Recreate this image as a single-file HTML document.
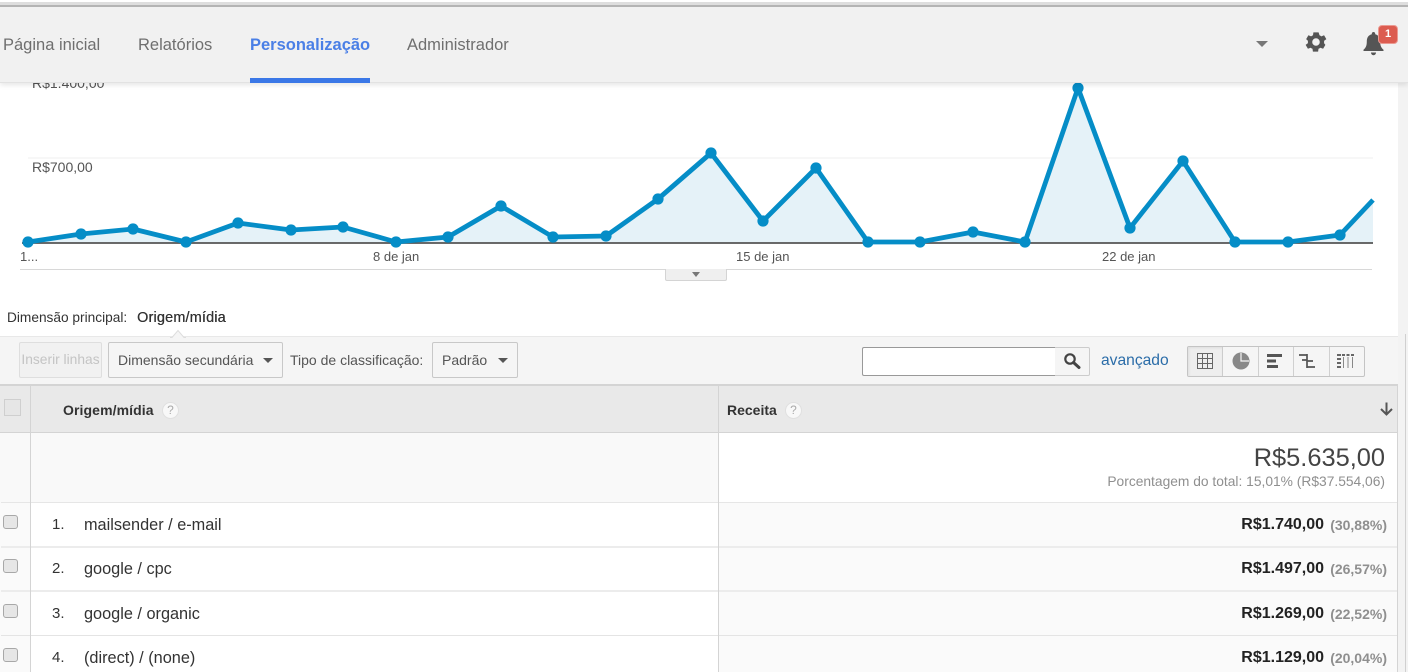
<!DOCTYPE html>
<html lang="pt"><head><meta charset="utf-8"><title>Analytics</title>
<style>
html,body{margin:0;padding:0;background:#fff}
body{width:1408px;height:672px;overflow:hidden;position:relative;font-family:"Liberation Sans",Arial,sans-serif;color:#333}
.a{position:absolute;white-space:nowrap}
.box{position:absolute;box-sizing:border-box}
.nav{top:36px;font-size:16.5px;line-height:18px;color:#6f6f6f}
.tick{top:250px;font-size:13px;line-height:14px;color:#555}
.btn{position:absolute;box-sizing:border-box;border:1px solid #c8c8c8;border-radius:2px;background:#f5f5f5}
.tri{position:absolute;width:0;height:0;border-left:5px solid transparent;border-right:5px solid transparent;border-top:5px solid #555}
.line{position:absolute;left:1px;width:1396px;height:2px;background:#ececec}
.cb{position:absolute;left:3px;width:15px;height:14px;box-sizing:border-box;border:1px solid #a8a8a8;border-radius:3px;background:#e6e6e6}
.n{position:absolute;left:52px;font-size:15px;line-height:16px;color:#333}
.s{position:absolute;left:84px;font-size:16.3px;line-height:16px;color:#333;white-space:nowrap}
.v{position:absolute;right:84px;font-size:16px;line-height:16px;font-weight:bold;color:#222;white-space:nowrap}
.p{position:absolute;right:21px;font-size:14px;line-height:16px;font-weight:bold;color:#8f8f8f;white-space:nowrap}
.q{position:absolute;width:17px;height:17px;border-radius:50%;background:#f8f8f8;border:1px solid #e0e0e0;box-sizing:border-box;font-size:12px;line-height:15px;text-align:center;color:#aaa}
</style></head><body>

<!-- side strip -->
<div class="box" style="left:1398px;top:83px;width:10px;height:589px;background:#f3f3f3"></div>
<div class="box" style="left:1405px;top:334px;width:1px;height:338px;background:#d0d0d0"></div>

<!-- chart -->
<svg class="a" style="left:0;top:83px" width="1398" height="200" viewBox="0 83 1398 200">
<line x1="28" y1="158" x2="1373" y2="158" stroke="#efefef" stroke-width="1"/>
<polygon fill="#e5f2f8" points="28,242 81,234 133,229 186,242 238,223 291,230 343,227 396,242 448,237 501,206 553,237 606,236 658,199 711,153 763,221 816,168 868,242 920,242 973,232 1025,242 1078,88 1130,228 1183,161 1235,242 1288,242 1340,235 1373,200 1373,243 28,243"/>
<line x1="22" y1="243" x2="1373" y2="243" stroke="#555" stroke-width="1.8"/>
<polyline fill="none" stroke="#058dc7" stroke-width="4.800" stroke-linejoin="round" points="28,242 81,234 133,229 186,242 238,223 291,230 343,227 396,242 448,237 501,206 553,237 606,236 658,199 711,153 763,221 816,168 868,242 920,242 973,232 1025,242 1078,88 1130,228 1183,161 1235,242 1288,242 1340,235 1373,200"/>
<g fill="#058dc7">
<circle cx="28" cy="242" r="5.600"/><circle cx="81" cy="234" r="5.600"/><circle cx="133" cy="229" r="5.600"/><circle cx="186" cy="242" r="5.600"/><circle cx="238" cy="223" r="5.600"/><circle cx="291" cy="230" r="5.600"/><circle cx="343" cy="227" r="5.600"/><circle cx="396" cy="242" r="5.600"/><circle cx="448" cy="237" r="5.600"/><circle cx="501" cy="206" r="5.600"/><circle cx="553" cy="237" r="5.600"/><circle cx="606" cy="236" r="5.600"/><circle cx="658" cy="199" r="5.600"/><circle cx="711" cy="153" r="5.600"/><circle cx="763" cy="221" r="5.600"/><circle cx="816" cy="168" r="5.600"/><circle cx="868" cy="242" r="5.600"/><circle cx="920" cy="242" r="5.600"/><circle cx="973" cy="232" r="5.600"/><circle cx="1025" cy="242" r="5.600"/><circle cx="1078" cy="88" r="5.600"/><circle cx="1130" cy="228" r="5.600"/><circle cx="1183" cy="161" r="5.600"/><circle cx="1235" cy="242" r="5.600"/><circle cx="1288" cy="242" r="5.600"/><circle cx="1340" cy="235" r="5.600"/>
</g>
<line x1="20" y1="269.500" x2="1372" y2="269.500" stroke="#d8d8d8" stroke-width="1"/>
</svg>
<div class="a" style="left:32px;top:75px;font-size:14px;line-height:16px;color:#555">R$1.400,00</div>
<div class="a" style="left:32px;top:159px;font-size:14px;line-height:16px;color:#555">R$700,00</div>
<div class="a tick" style="left:20px">1...</div>
<div class="a tick" style="left:373px">8 de jan</div>
<div class="a tick" style="left:736px">15 de jan</div>
<div class="a tick" style="left:1102px">22 de jan</div>
<div class="box" style="left:665px;top:269px;width:62px;height:12px;background:#efefef;border:1px solid #d4d4d4;border-top:none;border-radius:0 0 2px 2px"></div>
<div class="tri" style="left:692px;top:272px;border-left-width:4px;border-right-width:4px;border-top-color:#777"></div>

<!-- top nav -->
<div class="box" style="left:0;top:0;width:1408px;height:83px;background:#f1f1f1;border-bottom:1px solid #e2e2e2;box-shadow:0 2px 5px rgba(0,0,0,.10)"></div>
<div class="box" style="left:0;top:0;width:1408px;height:2px;background:#fff"></div>
<div class="box" style="left:0;top:2px;width:1408px;height:3px;background:#dedede"></div>
<div class="box" style="left:0;top:5px;width:1408px;height:2px;background:#b4b4b4"></div>
<div class="a nav" style="left:3px">Página inicial</div>
<div class="a nav" style="left:138px">Relatórios</div>
<div class="a nav" style="left:250px;color:#4a7fe6;font-weight:bold">Personalização</div>
<div class="box" style="left:250px;top:78px;width:120px;height:5px;background:#3b78e7"></div>
<div class="a nav" style="left:407px">Administrador</div>
<div class="tri" style="left:1256px;top:41px;border-left-width:6px;border-right-width:6px;border-top:6px solid #777"></div>
<svg class="a" style="left:1303px;top:29px" width="26" height="26" viewBox="0 0 24 24"><path fill="#555" fill-rule="evenodd" d="M19.400 13c.05-.33.08-.66.08-1s-.03-.67-.08-1l2.150-1.650-2.100-3.600-2.500 1c-.52-.4-1.100-.74-1.730-1L14.400 3.100h-4.800l-.37 2.650c-.63.26-1.200.6-1.730 1l-2.500-1-2.100 3.600L4.600 11c-.05.33-.08.66-.08 1s.03.67.08 1l-2.150 1.650 2.100 3.600 2.500-1c.52.4 1.100.74 1.730 1l.37 2.650h4.800l.37-2.650c.63-.26 1.200-.6 1.730-1l2.500 1 2.100-3.600L19.400 13zM12 15.500a3.500 3.500 0 1 1 0-7 3.500 3.500 0 0 1 0 7z"/></svg>
<svg class="a" style="left:1361px;top:30px" width="25" height="27" viewBox="0 0 25 27"><path fill="#555" d="M12.500 2c1 0 1.700.7 1.700 1.700v.6c3.400.8 5 3.600 5 7.200 0 4.300 1 6.200 3.300 8.300v1.200H2.500v-1.200c2.300-2.100 3.300-4 3.300-8.300 0-3.600 1.600-6.400 5-7.200v-.6c0-1 .7-1.700 1.700-1.700z"/><path fill="#555" d="M10 22.500h5c0 1.500-1 2.700-2.500 2.700S10 24 10 22.500z"/></svg>
<div class="box" style="left:1378px;top:25px;width:20px;height:19px;background:#dc5c50;border-radius:4px;border:1px solid #eb9a92;color:#fff;font-size:11px;font-weight:bold;line-height:17px;text-align:center">1</div>

<!-- dimension -->
<div class="a" style="left:7px;top:311px;font-size:13.7px;line-height:14px;color:#333">Dimensão principal:</div>
<div class="a" style="left:137px;top:311px;font-size:14.400px;line-height:14px;color:#333;letter-spacing:.2px;text-shadow:.3px 0 0 #333">Origem/mídia</div>

<!-- toolbar -->
<div class="box" style="left:0;top:336px;width:1398px;height:48px;background:#f5f5f5;border-top:1px solid #e8e8e8"></div>
<svg class="a" style="left:170px;top:329px" width="16" height="9" viewBox="0 0 16 9"><path d="M0 8.500h2L8 1.500l6 7h2" fill="#f5f5f5" stroke="#ddd"/></svg>
<div class="btn" style="left:19px;top:342px;width:83px;height:36px;border-color:#dedede;background:#f1f1f1;color:#c4c4c4;font-size:13.800px;line-height:34px;text-align:center;white-space:nowrap;overflow:hidden">Inserir linhas</div>
<div class="btn" style="left:108px;top:342px;width:175px;height:36px;font-size:14px;line-height:34px;padding-left:9px;color:#555;white-space:nowrap">Dimensão secundária</div>
<div class="tri" style="left:263px;top:358px"></div>
<div class="a" style="left:290px;top:353px;font-size:14px;line-height:15px;color:#555">Tipo de classificação:</div>
<div class="btn" style="left:432px;top:342px;width:86px;height:36px;font-size:14px;line-height:34px;padding-left:9px;color:#555">Padrão</div>
<div class="tri" style="left:498px;top:358px"></div>
<div class="box" style="left:862px;top:347px;width:194px;height:29px;background:#fff;border:1px solid #999;border-right:1px solid #ccc;border-radius:2px 0 0 2px"></div>
<div class="box" style="left:1055px;top:347px;width:35px;height:29px;background:#f5f5f5;border:1px solid #ccc;border-left:none;border-radius:0 2px 2px 0"></div>
<svg class="a" style="left:1063px;top:352px" width="18" height="18" viewBox="0 0 18 18"><circle cx="7" cy="7" r="4.700" fill="none" stroke="#444" stroke-width="2.200"/><path d="M10.500 10.500L16 15.500" stroke="#444" stroke-width="3" stroke-linecap="round"/></svg>
<div class="a" style="left:1101px;top:353px;font-size:15.600px;line-height:16px;color:#2a6ca8">avançado</div>

<div class="btn" style="left:1187px;top:346px;width:178px;height:31px;background:#f5f5f5;border-color:#c4c4c4;border-width:1px"></div>
<div class="box" style="left:1188px;top:347px;width:35px;height:29px;background:#eee;border-right:1px solid #ccc;box-shadow:inset 1px 1px 2px #ddd"></div>
<div class="box" style="left:1258px;top:347px;width:1px;height:29px;background:#d0d0d0"></div>
<div class="box" style="left:1293px;top:347px;width:1px;height:29px;background:#d0d0d0"></div>
<div class="box" style="left:1329px;top:347px;width:1px;height:29px;background:#d0d0d0"></div>
<svg class="a" style="left:1187px;top:346px" width="178" height="31" viewBox="0 0 178 31">
<g fill="none" stroke="#666" stroke-width="1"><rect x="10.500" y="7.500" width="15" height="15"/><path d="M15.500 7.500v15M20.500 7.500v15M10.500 12.500h15M10.500 17.500h15"/></g>
<circle cx="54" cy="15" r="8.500" fill="#888"/><path d="M54 7v8h8" fill="none" stroke="#f5f5f5" stroke-width="1.200"/>
<g fill="#555"><rect x="80" y="8" width="15" height="3"/><rect x="80" y="13.500" width="9" height="3"/><rect x="80" y="19" width="11" height="3"/></g>
<g fill="none" stroke="#555" stroke-width="1.700"><path d="M112 9h8M120 8v7M120 14h-5M120 14v8M120 21h8M120 15h6"/></g>
<g fill="#666"><rect x="150" y="8" width="4" height="2"/><rect x="150" y="12" width="4" height="2"/><rect x="150" y="16" width="4" height="2"/><rect x="150" y="20" width="4" height="2"/><rect x="155" y="8" width="3" height="2"/><rect x="159.500" y="8" width="3" height="2"/><rect x="164" y="8" width="3" height="2"/></g>
<g stroke="#888" stroke-width="1"><path d="M156.500 11v11M161 11v11M165.500 11v11"/></g>
</svg>

<!-- table head -->
<div class="box" style="left:0;top:384px;width:1398px;height:49px;background:#e9e9e9;border-top:2px solid #d4d4d4;border-bottom:1px solid #d4d4d4"></div>
<div class="box" style="left:4px;top:399px;width:17px;height:17px;border:1px solid #cfcfcf;background:#e6e6e6"></div>
<div class="a" style="left:63px;top:403px;font-size:14px;line-height:15px;font-weight:bold;color:#333;letter-spacing:.1px">Origem/mídia</div>
<div class="q" style="left:162px;top:402px">?</div>
<div class="a" style="left:727px;top:403px;font-size:14px;line-height:15px;font-weight:bold;color:#333">Receita</div>
<div class="q" style="left:785px;top:402px">?</div>
<svg class="a" style="left:1379px;top:401px" width="15" height="16" viewBox="0 0 15 16"><path d="M7.500 1.500v11.500M2 8l5.500 5.500L13 8" fill="none" stroke="#555" stroke-width="2"/></svg>

<!-- total row -->
<div class="box" style="left:0;top:433px;width:718px;height:70px;background:#f9f9f9"></div>
<div class="box" style="left:719px;top:433px;width:678px;height:70px;background:#fff"></div>
<div class="a" style="right:23px;top:444px;font-size:25.400px;line-height:28px;color:#444">R$5.635,00</div>
<div class="a" style="right:23px;top:474px;font-size:13.800px;line-height:15px;color:#8f8f8f">Porcentagem do total: 15,01% (R$37.554,06)</div>

<!-- rows -->
<div class="box" style="left:719px;top:503px;width:678px;height:169px;background:#fafafa"></div>
<div class="box" style="left:31px;top:503px;width:687px;height:169px;background:#fff"></div>
<div class="box" style="left:0;top:503px;width:30px;height:169px;background:#fafafa"></div>
<div class="line" style="top:502px;height:1px;background:#e6e6e6"></div>
<div class="line" style="top:546px"></div>
<div class="line" style="top:590px"></div>
<div class="line" style="top:635px;height:1px;background:#e4e4e4"></div>
<!-- column rules -->
<div class="box" style="left:30px;top:385px;width:1px;height:287px;background:#d4d4d4"></div>
<div class="box" style="left:718px;top:385px;width:1px;height:287px;background:#d4d4d4"></div>
<div class="box" style="left:1397px;top:384px;width:1px;height:288px;background:#d4d4d4"></div>

<div class="cb" style="top:515px"></div><div class="n" style="top:517px">1.</div><div class="s" style="top:517px">mailsender / e-mail</div>
<div class="v" style="top:517px">R$1.740,00</div><div class="p" style="top:517px">(30,88%)</div>
<div class="cb" style="top:559px"></div><div class="n" style="top:561px">2.</div><div class="s" style="top:561px">google / cpc</div>
<div class="v" style="top:561px">R$1.497,00</div><div class="p" style="top:561px">(26,57%)</div>
<div class="cb" style="top:604px"></div><div class="n" style="top:606px">3.</div><div class="s" style="top:606px">google / organic</div>
<div class="v" style="top:606px">R$1.269,00</div><div class="p" style="top:606px">(22,52%)</div>
<div class="cb" style="top:648px"></div><div class="n" style="top:650px">4.</div><div class="s" style="top:650px">(direct) / (none)</div>
<div class="v" style="top:650px">R$1.129,00</div><div class="p" style="top:650px">(20,04%)</div>
</body></html>
